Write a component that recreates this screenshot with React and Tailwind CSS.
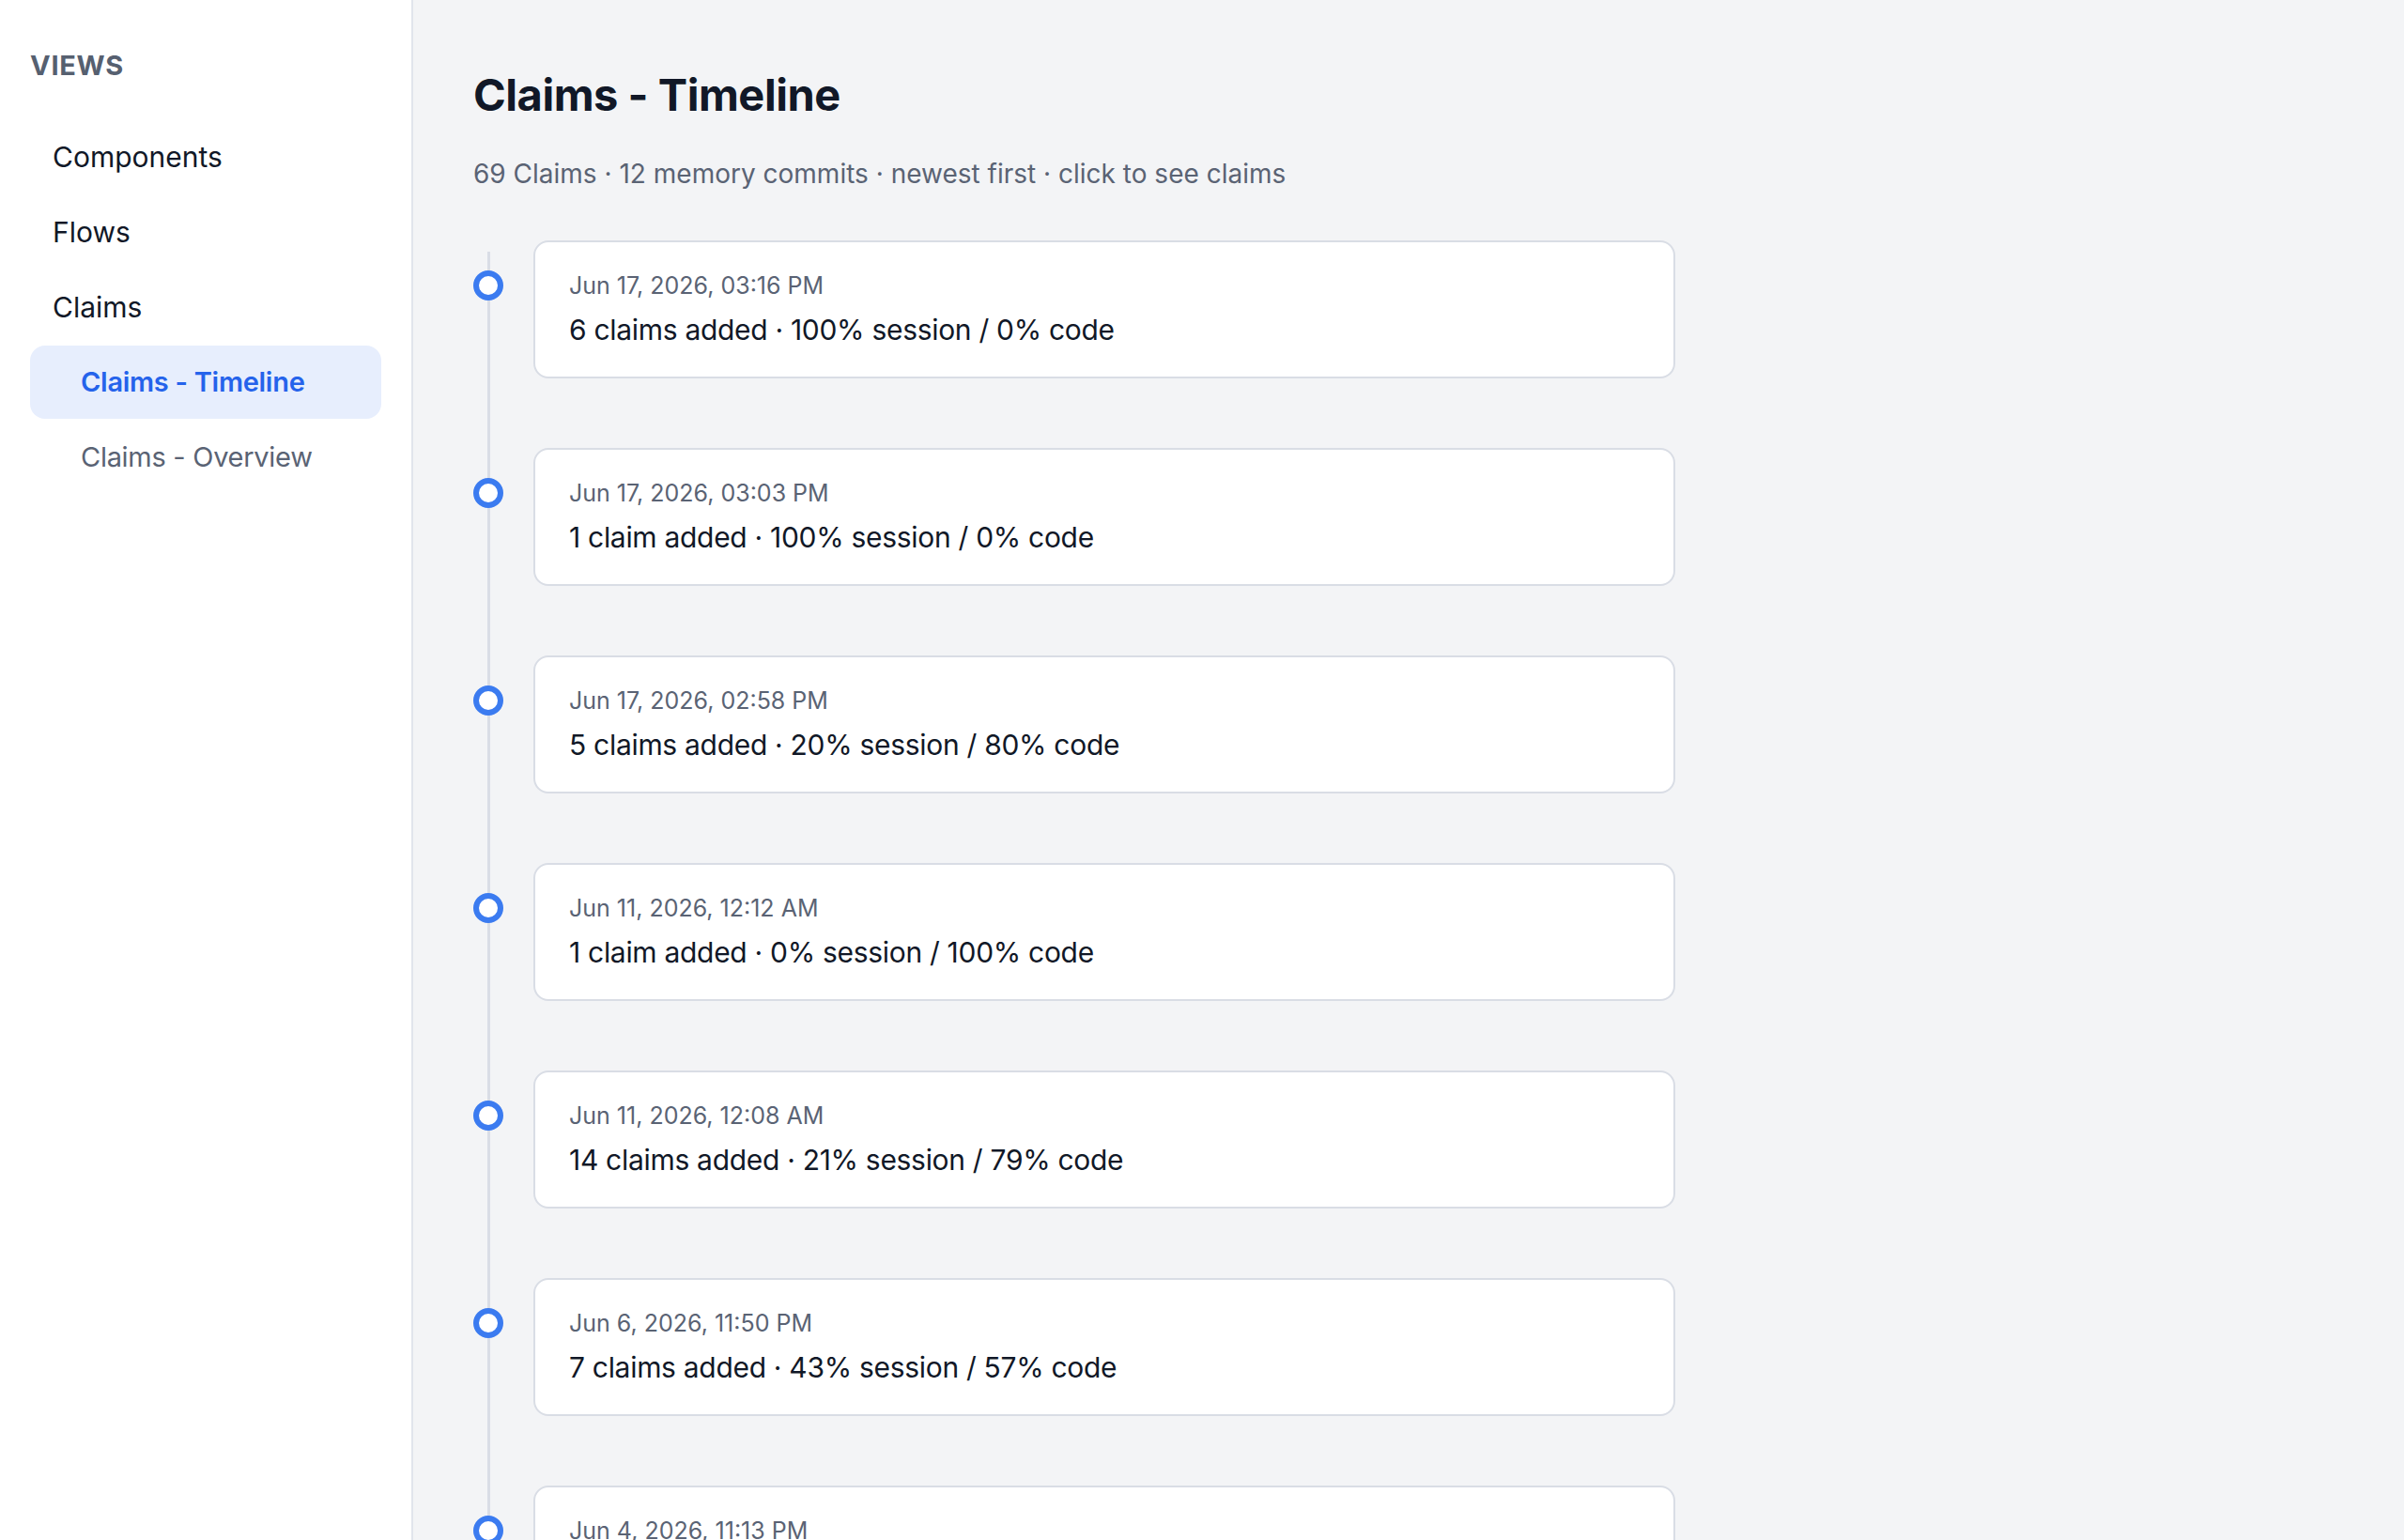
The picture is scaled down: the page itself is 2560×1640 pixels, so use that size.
import { useState } from "react";

const commits = [
  { date: "Jun 17, 2026, 03:16 PM", summary: "6 claims added · 100% session / 0% code" },
  { date: "Jun 17, 2026, 03:03 PM", summary: "1 claim added · 100% session / 0% code" },
  { date: "Jun 17, 2026, 02:58 PM", summary: "5 claims added · 20% session / 80% code" },
  { date: "Jun 11, 2026, 12:12 AM", summary: "1 claim added · 0% session / 100% code" },
  { date: "Jun 11, 2026, 12:08 AM", summary: "14 claims added · 21% session / 79% code" },
  { date: "Jun 6, 2026, 11:50 PM", summary: "7 claims added · 43% session / 57% code" },
  { date: "Jun 4, 2026, 11:13 PM", summary: "3 claims added · 67% session / 33% code" },
];

const Sidebar = () => {
  return (
    <aside className="w-[440px] shrink-0 bg-white border-r-2 border-[#e1e5ec] px-8 pt-[52px]">
      <div className="text-[29px] leading-[36px] font-bold tracking-wide text-[#566070] mb-[40px]">
        VIEWS
      </div>
      <nav className="flex flex-col gap-[2px]">
        <a className="h-[78px] flex items-center pl-6 text-[30px] text-[#111827]">Components</a>
        <a className="h-[78px] flex items-center pl-6 text-[30px] text-[#111827]">Flows</a>
        <a className="h-[78px] flex items-center pl-6 text-[30px] text-[#111827]">Claims</a>
        <a className="h-[78px] flex items-center pl-[54px] rounded-2xl bg-[#e7eefd] text-[29px] tracking-[-0.01em] font-semibold text-[#2563eb]">
          Claims - Timeline
        </a>
        <a className="h-[78px] flex items-center pl-[54px] text-[29px] tracking-[-0.01em] text-[#5a6374]">
          Claims - Overview
        </a>
      </nav>
    </aside>
  );
};

const TimelineItem = ({ item }) => {
  return (
    <div className="flex">
      <div className="w-[64px] shrink-0">
        <div className="mt-[32px] w-[32px] h-[32px] rounded-full border-[6px] border-[#3b7bf0] bg-white relative z-10" />
      </div>
      <button className="w-[1216px] text-left bg-white border-2 border-[#d9dde5] rounded-2xl px-[36px] pt-[29px] pb-[28px]">
        <div className="text-[25px] leading-[34px] text-[#5a6374]">{item.date}</div>
        <div className="mt-2 text-[30px] leading-[44px] tracking-[-0.01em] text-[#111827]">{item.summary}</div>
      </button>
    </div>
  );
};

export default function App() {
  const [items] = useState(commits);

  return (
    <div className="flex h-[1640px] overflow-hidden" style={{ fontFamily: "Inter, 'Noto Sans', sans-serif" }}>
      <Sidebar />
      <main className="flex-1 bg-[#f3f4f6] pl-[64px] pt-[71px]">
        <h1 className="text-[47px] leading-[60px] font-bold tracking-[-0.01em] text-[#111827]">Claims - Timeline</h1>
        <p className="mt-[34px] text-[28px] leading-[40px] text-[#5a6374]">
          69 Claims · 12 memory commits · newest first · click to see claims
        </p>
        <div className="relative mt-[51px]">
          {/* vertical line behind dots */}
          <div className="absolute left-[15px] top-[12px] bottom-0 w-[3px] bg-[#d9dde6]" />
          <div className="flex flex-col gap-[74px]">
            {items.map((item) => (
              <TimelineItem key={item.date} item={item} />
            ))}
          </div>
        </div>
      </main>
    </div>
  );
}
